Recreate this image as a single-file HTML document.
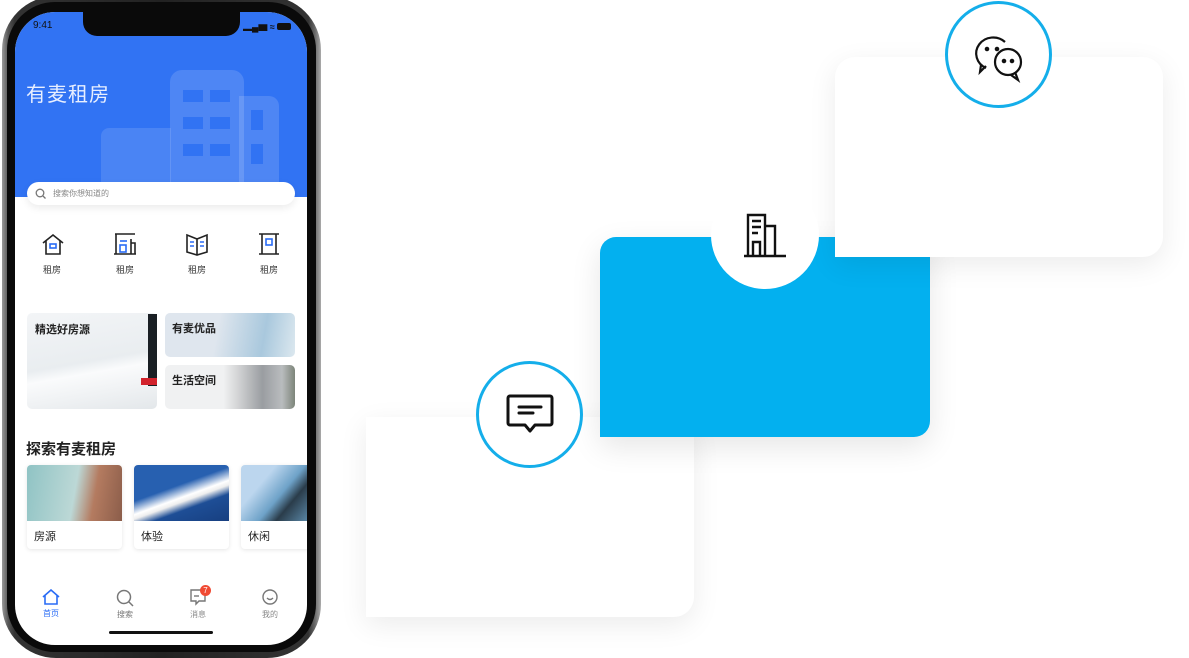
<!DOCTYPE html>
<html><head><meta charset="utf-8"><style>
*{margin:0;padding:0;box-sizing:border-box}
body{width:1189px;height:656px;background:#fff;position:relative;overflow:hidden;font-family:"Liberation Sans","Noto Sans CJK SC",sans-serif}
.abs{position:absolute}
.frame{left:2px;top:-4px;width:319px;height:662px;border-radius:54px;background:linear-gradient(90deg,#9a9a9a,#555 2%,#333 4%,#222 50%,#333 96%,#666 98%,#aaa);}
.bezel{left:7px;top:2px;width:309px;height:650px;border-radius:48px;background:#0a0a0a}
.screen{left:15px;top:12px;width:292px;height:633px;border-radius:40px;background:#fff;overflow:hidden}
.hdr{left:0;top:0;width:292px;height:185px;background:#3173f3}
.notch{left:68px;top:0;width:157px;height:24px;background:#0a0a0a;border-radius:0 0 14px 14px}
.t{color:#222;font-size:11px;font-weight:bold}
.card{position:absolute;background:#fff;border-radius:20px;box-shadow:0 8px 28px rgba(0,0,0,.08)}
.circ{position:absolute;border-radius:50%;background:#fff;border:3px solid #14aeea}
</style></head><body>
<div class="card" style="left:366px;top:417px;width:328px;height:200px;border-radius:0 20px 20px 0"></div>
<div class="abs" style="left:600px;top:237px;width:330px;height:200px;background:#03b0ef;border-radius:16px 0 16px 0;box-shadow:0 10px 30px rgba(0,0,0,.1)"></div>
<div class="card" style="left:835px;top:57px;width:328px;height:200px;border-radius:20px 20px 20px 0"></div>
<div class="abs" style="left:711px;top:181px;width:108px;height:108px;border-radius:50%;background:#fff"></div>
<svg class="abs" style="left:742px;top:212px" width="46" height="46" viewBox="0 0 46 46" fill="none" stroke="#111" stroke-width="2.4"><path d="M6 44V3h17v41M23 14h10v30M2 44h42M10 9h9M10 15h9M10 21h6M11 44V30h7v14"/></svg>
<div class="circ" style="left:945px;top:1px;width:107px;height:107px"></div>
<svg class="abs" style="left:972px;top:30px" width="54" height="54" viewBox="0 0 54 54" fill="none" stroke="#111" stroke-width="2.2"><path d="M14 38a17 16 0 1 1 19-26"/><path d="M14 36l-6 6 1-7"/><circle cx="36" cy="32" r="13"/><path d="M43 42l3 8-7-5"/><circle cx="15" cy="19" r="1.2" fill="#111"/><circle cx="25" cy="19" r="1.2" fill="#111"/><circle cx="32" cy="31" r="1.2" fill="#111"/><circle cx="40" cy="31" r="1.2" fill="#111"/></svg>
<div class="circ" style="left:476px;top:361px;width:107px;height:107px"></div>
<svg class="abs" style="left:505px;top:393px" width="50" height="44" viewBox="0 0 50 44" fill="none" stroke="#111" stroke-width="3"><path d="M5 3h40a2 2 0 0 1 2 2v25a2 2 0 0 1-2 2H30l-5 6-5-6H5a2 2 0 0 1-2-2V5a2 2 0 0 1 2-2z" stroke-linejoin="round"/><path d="M14 14h22M14 20h14" stroke-linecap="round"/></svg>
<div class="abs frame"></div>
<div class="abs bezel"></div>
<div class="abs screen">
 <div class="abs hdr"></div>
 <div class="abs" style="left:155px;top:58px;width:74px;height:127px;background:rgba(255,255,255,.14);border-radius:12px 12px 0 0"></div>
 <div class="abs" style="left:224px;top:84px;width:40px;height:101px;background:rgba(255,255,255,.14);border-radius:0 10px 0 0"></div>
 <div class="abs" style="left:86px;top:116px;width:70px;height:69px;background:rgba(255,255,255,.12);border-radius:8px 0 0 0"></div>
 <div class="abs" style="left:168px;top:78px;width:20px;height:12px;background:#3173f3;box-shadow:27px 0 #3173f3,0 27px #3173f3,27px 27px #3173f3,0 54px #3173f3,27px 54px #3173f3"></div>
 <div class="abs" style="left:236px;top:98px;width:12px;height:20px;background:#3173f3;box-shadow:0 34px #3173f3"></div>
 <div class="abs" style="left:18px;top:8px;color:#111;font-size:10px">9:41</div>
 <div class="abs notch"></div>
 <div class="abs" style="left:228px;top:8px;width:58px;height:9px;font-size:9px;color:#111;font-weight:bold">▂▄▆ ≈ <span style="display:inline-block;width:14px;height:7px;background:#111;border-radius:2px"></span></div>
 <div class="abs" style="left:11px;top:66px;color:#e8efff;font-size:20px;letter-spacing:1px">有麦租房</div>
 <div class="abs" style="left:12px;top:170px;width:268px;height:23px;background:#fff;border-radius:12px;box-shadow:0 3px 8px rgba(0,0,0,.08)"></div>
 <svg class="abs" style="left:20px;top:176px" width="11" height="11" viewBox="0 0 11 11" fill="none" stroke="#777" stroke-width="1.3"><circle cx="5" cy="5" r="3.8"/><path d="M8 8l2.5 2.5"/></svg>
 <div class="abs" style="left:38px;top:176px;font-size:8px;color:#888">搜索你想知道的</div>
 <svg class="abs" style="left:26px;top:220px" width="24" height="24" viewBox="0 0 24 24" fill="none" stroke="#222" stroke-width="1.6"><path d="M2 11L12 3l10 8M5 9v13h14V9"/><rect x="9" y="12" width="6" height="4" stroke="#2a6cf5"/></svg>
 <svg class="abs" style="left:98px;top:220px" width="24" height="24" viewBox="0 0 24 24" fill="none" stroke="#222" stroke-width="1.6"><path d="M2 2h20M3 2v20h15V7M18 11h4v11h-4M1 22h22"/><rect x="7" y="13" width="6" height="7" stroke="#2a6cf5"/><path d="M7 9h7" stroke="#2a6cf5"/></svg>
 <svg class="abs" style="left:170px;top:220px" width="24" height="24" viewBox="0 0 24 24" fill="none" stroke="#222" stroke-width="1.6"><path d="M2 3l10 4 10-4v17l-10 3-10-3zM12 7v16"/><path d="M5 10h4M5 14h4M15 10h4M15 14h4" stroke="#2a6cf5"/></svg>
 <svg class="abs" style="left:242px;top:220px" width="24" height="24" viewBox="0 0 24 24" fill="none" stroke="#222" stroke-width="1.6"><path d="M2 2h20M5 2v20h14V2M2 22h20"/><rect x="9" y="7" width="6" height="6" stroke="#2a6cf5"/></svg>
 <div class="abs" style="left:28px;top:251px;font-size:9px;color:#333">租房</div>
 <div class="abs" style="left:101px;top:251px;font-size:9px;color:#333">租房</div>
 <div class="abs" style="left:173px;top:251px;font-size:9px;color:#333">租房</div>
 <div class="abs" style="left:245px;top:251px;font-size:9px;color:#333">租房</div>
 <div class="abs" style="left:12px;top:301px;width:130px;height:96px;border-radius:5px;background:linear-gradient(170deg,#f3f5f7 0%,#e9edf0 50%,#fafbfc 60%,#e3e7ea 100%)"></div>
 <div class="abs" style="left:133px;top:302px;width:9px;height:72px;background:#1a1f24"></div>
 <div class="abs" style="left:126px;top:366px;width:16px;height:7px;background:#d2232c"></div>
 <div class="abs" style="left:20px;top:308px" ><span class="t">精选好房源</span></div>
 <div class="abs" style="left:150px;top:301px;width:130px;height:44px;border-radius:5px;background:linear-gradient(100deg,#dfe6ee 40%,#a9c8dd 75%,#dce8ef)"></div>
 <div class="abs" style="left:157px;top:307px"><span class="t">有麦优品</span></div>
 <div class="abs" style="left:150px;top:353px;width:130px;height:44px;border-radius:5px;background:linear-gradient(90deg,#f0f1f2 45%,#d6d7d8 55%,#9a9da1 75%,#b9bcbe 90%,#7d857a)"></div>
 <div class="abs" style="left:157px;top:359px"><span class="t">生活空间</span></div>
 <div class="abs" style="left:11px;top:426px;font-size:15px;font-weight:bold;color:#222">探索有麦租房</div>
 <div class="abs" style="left:12px;top:453px;width:95px;height:84px;border-radius:4px;background:#fff;box-shadow:0 1px 4px rgba(0,0,0,.1);overflow:hidden"><div style="height:56px;background:linear-gradient(100deg,#8fc3c4,#bcd8d6 50%,#b47b60 70%,#8b5d4a)"></div><div style="padding:7px 7px;font-size:11px;color:#222">房源</div></div>
 <div class="abs" style="left:119px;top:453px;width:95px;height:84px;border-radius:4px;background:#fff;box-shadow:0 1px 4px rgba(0,0,0,.1);overflow:hidden"><div style="height:56px;background:linear-gradient(160deg,#2760b0 40%,#fff 55%,#eee 60%,#1e4e96 70%,#173f80)"></div><div style="padding:7px 7px;font-size:11px;color:#222">体验</div></div>
 <div class="abs" style="left:226px;top:453px;width:70px;height:84px;border-radius:4px;background:#fff;box-shadow:0 1px 4px rgba(0,0,0,.1);overflow:hidden"><div style="height:56px;background:linear-gradient(130deg,#bcd6ee 30%,#6ea2c8 55%,#2a3c4a 70%,#5f8fb0)"></div><div style="padding:7px 7px;font-size:11px;color:#222">休闲</div></div>
 <svg class="abs" style="left:27px;top:577px" width="18" height="16" viewBox="0 0 18 16" fill="none" stroke="#2a6cf5" stroke-width="1.6"><path d="M1 8L9 1l8 7M3 6v9h12V6"/></svg>
 <div class="abs" style="left:28px;top:596px;font-size:8px;color:#2a6cf5">首页</div>
 <svg class="abs" style="left:101px;top:577px" width="18" height="18" viewBox="0 0 18 18" fill="none" stroke="#777" stroke-width="1.5"><circle cx="8" cy="8" r="6.5"/><path d="M13 13l4 4"/></svg>
 <div class="abs" style="left:102px;top:597px;font-size:8px;color:#777">搜索</div>
 <svg class="abs" style="left:175px;top:577px" width="16" height="17" viewBox="0 0 16 17" fill="none" stroke="#777" stroke-width="1.4"><path d="M1 1h14v11H9l-3 3v-3H1z"/><path d="M4 7h5"/></svg>
 <div class="abs" style="left:185px;top:573px;width:11px;height:11px;border-radius:50%;background:#f04a33;color:#fff;font-size:8px;text-align:center;line-height:11px">7</div>
 <div class="abs" style="left:175px;top:597px;font-size:8px;color:#888">消息</div>
 <svg class="abs" style="left:247px;top:577px" width="16" height="16" viewBox="0 0 16 16" fill="none" stroke="#777" stroke-width="1.4"><circle cx="8" cy="8" r="7"/><path d="M5 9q3 3 6 0"/></svg>
 <div class="abs" style="left:247px;top:597px;font-size:8px;color:#888">我的</div>
 <div class="abs" style="left:94px;top:619px;width:104px;height:3px;border-radius:2px;background:#111"></div>
</div>
</body></html>
